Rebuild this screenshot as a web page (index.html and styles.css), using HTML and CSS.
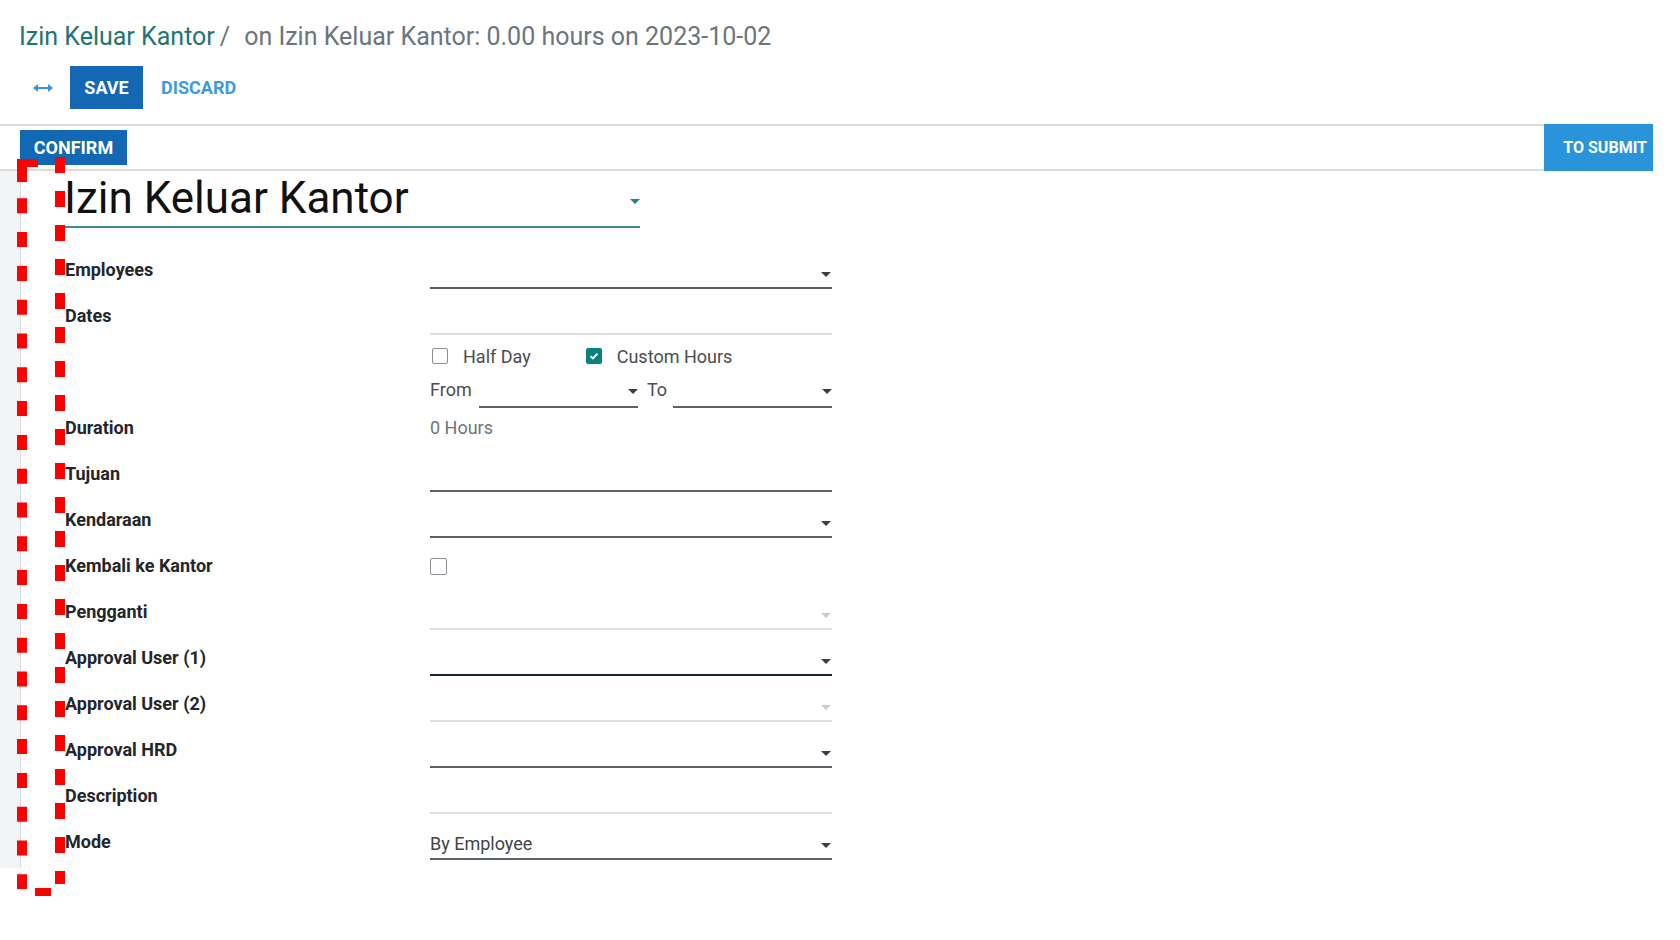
FILE: index.html
```html
<!DOCTYPE html>
<html lang="en">
<head>
  <meta charset="UTF-8">
  <title>Izin Keluar Kantor</title>
  <link rel="stylesheet" href="styles.css">
</head>
<body>
  <div class="app">
    <div class="control-panel">
      <div class="breadcrumb">
        <span class="crumb-link">Izin Keluar Kantor</span><span class="crumb-sep">/</span><span class="crumb-active">on Izin Keluar Kantor: 0.00 hours on 2023-10-02</span>
      </div>
      <div class="toolbar">
        <span class="btn-expand">
          <svg width="20" height="10" viewBox="0 0 20 10">
            <path d="M4 5 H16" stroke="#3d93d6" stroke-width="2"/>
            <path d="M0 5 L5 1 V9 Z M20 5 L15 1 V9 Z" fill="#3d93d6"/>
          </svg>
        </span>
        <button class="btn-primary btn-save">SAVE</button>
        <button class="btn-link">DISCARD</button>
      </div>
    </div>

    <div class="statusbar">
      <button class="btn-primary btn-confirm">CONFIRM</button>
      <span class="stage-active">TO SUBMIT</span>
    </div>

    <div class="sheet-wrap">
      <div class="sheet">
        <div class="title-field">
          <span>Izin Keluar Kantor</span>
          <span class="caret caret-teal"></span>
        </div>

        <div class="form">
          <div class="row">
            <div class="label">Employees</div>
            <div class="field"><span></span><span class="caret"></span></div>
          </div>

          <div class="row">
            <div class="label">Dates</div>
            <div class="dates">
              <div class="field field-light"></div>
              <div class="options">
                <span class="checkbox"></span>
                <span class="opt-text">Half Day</span>
                <span class="checkbox checked">
                  <svg width="10" height="8" viewBox="0 0 10 8"><path d="M1.5 4.2 L4 6.4 L8.5 1.6" stroke="#fff" stroke-width="2" fill="none"/></svg>
                </span>
                <span class="opt-text">Custom Hours</span>
              </div>
              <div class="range">
                <span class="range-from">From</span>
                <span class="range-input"><span class="caret"></span></span>
                <span class="range-to">To</span>
                <span class="range-input"><span class="caret"></span></span>
              </div>
            </div>
          </div>

          <div class="row row-short">
            <div class="label">Duration</div>
            <div class="field field-plain muted">0 Hours</div>
          </div>

          <div class="row">
            <div class="label">Tujuan</div>
            <div class="field"></div>
          </div>

          <div class="row">
            <div class="label">Kendaraan</div>
            <div class="field"><span></span><span class="caret"></span></div>
          </div>

          <div class="row">
            <div class="label">Kembali ke Kantor</div>
            <div class="field field-plain"><span class="checkbox checkbox-solo"></span></div>
          </div>

          <div class="row">
            <div class="label">Pengganti</div>
            <div class="field field-light"><span></span><span class="caret caret-light"></span></div>
          </div>

          <div class="row">
            <div class="label">Approval User (1)</div>
            <div class="field field-focus"><span></span><span class="caret"></span></div>
          </div>

          <div class="row">
            <div class="label">Approval User (2)</div>
            <div class="field field-light"><span></span><span class="caret caret-light"></span></div>
          </div>

          <div class="row">
            <div class="label">Approval HRD</div>
            <div class="field"><span></span><span class="caret"></span></div>
          </div>

          <div class="row">
            <div class="label">Description</div>
            <div class="field field-light"></div>
          </div>

          <div class="row">
            <div class="label">Mode</div>
            <div class="field"><span class="value">By Employee</span><span class="caret"></span></div>
          </div>
        </div>
      </div>
    </div>

    <!-- red dashed highlight drawn over the label column -->
    <svg class="highlight" width="80" height="940" viewBox="0 0 80 940">
      <g fill="#ff0000">
        <rect x="17" y="159" width="21" height="8"/>
        <rect x="17" y="159" width="10" height="23"/>
        <rect x="35" y="888" width="16" height="8"/>
      </g>
      <path d="M22 164.5 V889" stroke="#ff0000" stroke-width="10" stroke-dasharray="15 18.8"/>
      <path d="M60 157 V884" stroke="#ff0000" stroke-width="10" stroke-dasharray="16 18"/>
    </svg>
  </div>
</body>
</html>
```

FILE: styles.css
```css
body {
  margin: 0;
  font-family: Roboto, "Noto Sans", sans-serif;
  color: #212529;
  background: #fff;
}

.app {
  position: relative;
  width: 1653px;
  min-height: 940px;
}

/* control panel */

.control-panel {
  padding: 22px 0 15px 19px;
}

.breadcrumb {
  font-size: 25px;
  line-height: 29px;
  white-space: nowrap;
}

.crumb-link {
  color: #1f7474;
}

.crumb-sep {
  color: #6c757d;
  padding: 0 14px 0 5px;
}

.crumb-active {
  color: #6c757d;
}

.toolbar {
  display: flex;
  align-items: center;
  height: 43px;
  margin-top: 15px;
  padding-left: 14px;
}

.btn-expand {
  display: flex;
  width: 20px;
  height: 10px;
}

button {
  font-family: inherit;
  border: none;
  cursor: pointer;
}

.btn-primary {
  background: #1268b2;
  color: #fff;
  font-size: 18px;
  font-weight: 700;
}

.btn-save {
  height: 43px;
  width: 73px;
  margin-left: 17px;
  padding: 0;
}

.btn-link {
  background: none;
  color: #3f9ad8;
  font-size: 18px;
  font-weight: 700;
  padding: 0;
  margin-left: 18px;
}

/* status bar */

.statusbar {
  display: flex;
  justify-content: space-between;
  align-items: flex-start;
  height: 43px;
  border-top: 2px solid #dcdcdc;
  border-bottom: 2px solid #dcdcdc;
  padding-left: 20px;
}

.btn-confirm {
  height: 35px;
  width: 107px;
  margin-top: 4px;
  padding: 0;
}

.stage-active {
  height: 47px;
  width: 109px;
  margin-top: -2px;
  box-sizing: border-box;
  padding-right: 6px;
  background: #2a94db;
  color: #fff;
  font-size: 16px;
  font-weight: 700;
  line-height: 47px;
  text-align: right;
}

/* sheet */

.sheet-wrap {
  display: flex;
  background: #f3f4f7;
  padding-left: 20px;
}

.sheet {
  flex: 1;
  background: #fff;
  border-left: 1px solid #d9dade;
  padding: 1px 0 8px 44px;
}

.title-field {
  display: flex;
  justify-content: space-between;
  align-items: center;
  width: 575px;
  font-size: 44px;
  line-height: 52px;
  color: #111;
  padding-bottom: 2px;
  border-bottom: 2px solid #3b8c8c;
}

.title-field span:first-child {
  margin-left: -1px;
}

.caret {
  width: 0;
  height: 0;
  border-left: 5px solid transparent;
  border-right: 5px solid transparent;
  border-top: 5px solid #3b3f45;
  margin-top: 13px;
  margin-right: 1px;
}

.caret-teal {
  border-top-color: #1f8585;
  margin: 6px 0 0 0;
}

.caret-light {
  border-top-color: #c9cbcf;
}

.form {
  margin-top: 15px;
}

.row {
  display: grid;
  grid-template-columns: 365px 402px;
}

.label {
  font-size: 18px;
  font-weight: 700;
  line-height: 24px;
  padding-top: 16px;
  color: #23262b;
}

.row:first-child .label,
.row:nth-child(2) .label {
  padding-top: 15px;
}

.field {
  display: flex;
  justify-content: space-between;
  align-items: flex-start;
  height: 46px;
  box-sizing: border-box;
  padding-top: 15px;
  font-size: 18px;
  line-height: 24px;
  border-bottom: 2px solid #5c6068;
}

.field .caret {
  margin-top: 14px;
}

.field-light {
  border-bottom-color: #dedfe1;
}

.field-focus {
  border-bottom-color: #1d2637;
}

.field-plain {
  border-bottom: none;
}

.value {
  color: #3f444a;
  margin-top: 3px;
}

.field .value + .caret {
  margin-top: 14px;
}

.muted {
  color: #6c757d;
}

.row-short .label,
.row-short .field {
  padding-top: 8px;
}

.row-short .field {
  height: 38px;
}

/* dates block */

.options {
  display: flex;
  align-items: center;
  height: 42px;
  font-size: 18px;
  color: #4a4d52;
}

.checkbox {
  display: flex;
  align-items: center;
  justify-content: center;
  width: 16px;
  height: 16px;
  box-sizing: border-box;
  border: 1px solid #8d9096;
  border-radius: 2px;
}

.options .checkbox:first-child {
  margin-left: 2px;
}

.checked {
  background: #08827f;
  border-color: #08827f;
}

.opt-text {
  margin-left: 15px;
  margin-right: 55px;
}

.opt-text:last-child {
  margin-right: 0;
}

.checkbox-solo {
  margin-top: 5px;
  width: 17px;
  height: 17px;
}

.range {
  display: flex;
  align-items: flex-start;
  height: 31px;
  font-size: 18px;
  line-height: 24px;
  color: #4a4d52;
}

.range-from {
  width: 49px;
  padding-top: 1px;
}

.range-to {
  width: 26px;
  padding: 1px 0 0 9px;
}

.range-input {
  display: flex;
  justify-content: flex-end;
  width: 159px;
  height: 31px;
  box-sizing: border-box;
  border-bottom: 2px solid #5c6068;
}

.range-input .caret {
  margin-top: 12px;
  margin-right: 0;
}

/* annotation overlay */

.highlight {
  position: absolute;
  top: 0;
  left: 0;
  pointer-events: none;
}
```
